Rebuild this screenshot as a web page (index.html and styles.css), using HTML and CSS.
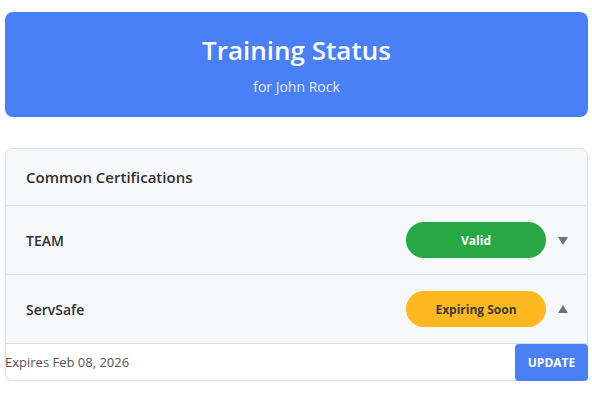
FILE: index.html
```html
<!DOCTYPE html>
<html>
<head>
<meta charset="utf-8">
<link rel="stylesheet" href="styles.css">
</head>
<body>
<div class="page">
  <header class="hero">
    <h1 class="hero-title">Training Status</h1>
    <p class="hero-sub">for John Rock</p>
  </header>
  <section class="card">
    <div class="card-head">Common Certifications</div>
    <div class="row">
      <span class="row-name">TEAM</span>
      <span class="pill pill-valid">Valid</span>
      <span class="caret caret-down"></span>
    </div>
    <div class="row">
      <span class="row-name">ServSafe</span>
      <span class="pill pill-warn">Expiring Soon</span>
      <span class="caret caret-up"></span>
    </div>
    <div class="detail">
      <span class="detail-text">Expires Feb 08, 2026</span>
      <button class="btn-update">UPDATE</button>
    </div>
  </section>
</div>
</body>
</html>
```
FILE: styles.css
```css
* { box-sizing: border-box; }
html, body { margin: 0; padding: 0; background: #fff; }
body { font-family: "Open Sans", "Noto Sans", sans-serif; color: #333; }
.page { padding: 12px 4px 0 5px; }
.hero {
  background: #4a80f6;
  border-radius: 8px;
  height: 105px;
  display: flex;
  flex-direction: column;
  align-items: center;
  padding-top: 20px;
  color: #fff;
}
.hero-title { margin: 0; font-size: 26px; font-weight: 600; line-height: 36px; }
.hero-sub { margin: 9px 0 0; font-size: 14px; line-height: 20px; color: #e6edff; }
.card {
  margin-top: 31px;
  border: 1px solid #dfe1e4;
  border-radius: 8px;
  background: #f7f8fa;
  box-shadow: 0 2px 4px rgba(0,0,0,0.06);
}
.card-head {
  height: 57px;
  display: flex;
  align-items: center;
  padding-left: 20px;
  font-size: 15px;
  font-weight: 600;
  color: #2f2f2f;
  border-bottom: 1px solid #dfe1e4;
}
.row {
  height: 69px;
  display: flex;
  align-items: center;
  padding: 0 19px 0 20px;
  border-bottom: 1px solid #dfe1e4;
}
.row-name { flex: 1; font-size: 14px; font-weight: 600; color: #2f2f2f; }
.pill {
  width: 140px;
  height: 36px;
  border-radius: 18px;
  display: flex;
  align-items: center;
  justify-content: center;
  font-size: 12px;
  font-weight: 700;
}
.pill-valid { background: #28a745; color: #fff; }
.pill-warn { background: #ffb81f; color: #3a3a3a; }
.caret {
  width: 0;
  height: 0;
  margin-left: 12px;
  border-left: 5px solid transparent;
  border-right: 5px solid transparent;
}
.caret-down { border-top: 8px solid #6c757d; margin-top: 1px; }
.caret-up { border-bottom: 8px solid #6c757d; margin-top: -1px; }
.detail {
  height: 36px;
  display: flex;
  align-items: center;
  background: #fff;
  border-radius: 0 0 8px 8px;
}
.detail-text { flex: 1; font-size: 13px; color: #555; margin-left: -1px; }
.btn-update {
  height: 37px;
  width: 73px;
  margin-right: -1px;
  margin-top: 1px;
  border: none;
  border-radius: 4px;
  background: #4a80f6;
  color: #fff;
  font-family: "Open Sans", "Noto Sans", sans-serif;
  font-size: 12px;
  font-weight: 700;
}
```
